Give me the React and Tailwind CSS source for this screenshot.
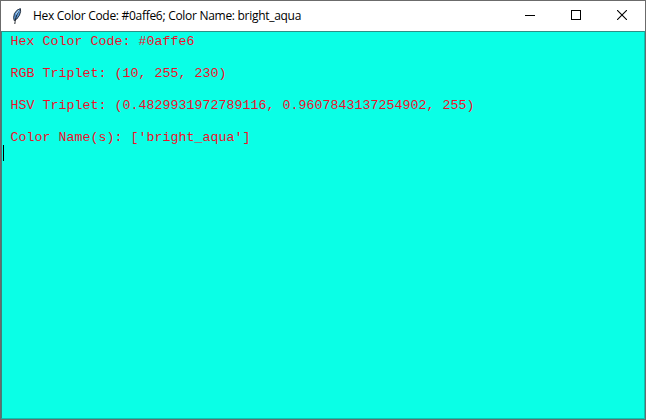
const lines = [
  "Hex Color Code: #0affe6",
  "",
  "RGB Triplet: (10, 255, 230)",
  "",
  "HSV Triplet: (0.4829931972789116, 0.9607843137254902, 255)",
  "",
  "Color Name(s): ['bright_aqua']",
];

function FeatherIcon() {
  return (
    <svg width="16" height="18" viewBox="0 0 16 18" className="block">
      <path d="M11.4 1.6 L8 3.2 L5.4 6.6 L4.6 10.6 L5.2 13.6 L7.8 12 L10.4 8.4 L11.6 4.6 Z" fill="#5b95d3" stroke="#17202c" strokeWidth=".9" />
      <path d="M10.2 3.4 C8 6.8 6.6 10 5.8 17" fill="none" stroke="#101418" strokeWidth=".9" />
      <path d="M10 3 L7 7.4" stroke="#a9d0f5" strokeWidth="1.1" />
    </svg>
  );
}

function WindowControls() {
  return (
    <div className="flex h-full items-center pb-0.5">
      <div className="flex w-[46px] justify-center">
        <svg width="10" height="10" viewBox="0 0 10 10" shapeRendering="crispEdges">
          <path d="M0 5.5H10" stroke="#000" />
        </svg>
      </div>
      <div className="flex w-[46px] justify-center">
        <svg width="10" height="10" viewBox="0 0 10 10" shapeRendering="crispEdges">
          <rect x=".5" y=".5" width="9" height="9" fill="none" stroke="#000" />
        </svg>
      </div>
      <div className="flex w-[46px] justify-center">
        <svg width="10" height="10" viewBox="0 0 10 10">
          <path d="M0 0L10 10M10 0L0 10" stroke="#000" strokeWidth="1.1" />
        </svg>
      </div>
    </div>
  );
}

export default function App() {
  return (
    <div className="flex h-[420px] w-[646px] flex-col overflow-hidden border border-[#6b6b6b] bg-white">
      <header className="flex h-[30px] shrink-0 items-center justify-between">
        <div className="flex items-center pl-2">
          <FeatherIcon />
          <h1 className="ml-2 whitespace-pre font-['Open_Sans',sans-serif] text-[12px] leading-4 tracking-[-0.29px] text-black">
            Hex Color Code: #0affe6; Color Name: bright_aqua
          </h1>
        </div>
        <WindowControls />
      </header>
      <main className="flex-1 border border-t-[#2e8f86] border-r-[#08c4b2] border-b-[#08c4b2] border-l-[#3f817b] bg-[#0affe6] pl-px pt-px">
        {lines.map((line, i) => (
          <pre key={i} className="h-4 pl-[7.6px] font-['Liberation_Mono',monospace] text-[13.33px] leading-[18px] text-[#ee0f2a]">
            {line}
          </pre>
        ))}
        <div className="h-4 w-px bg-black" />
      </main>
    </div>
  );
}
